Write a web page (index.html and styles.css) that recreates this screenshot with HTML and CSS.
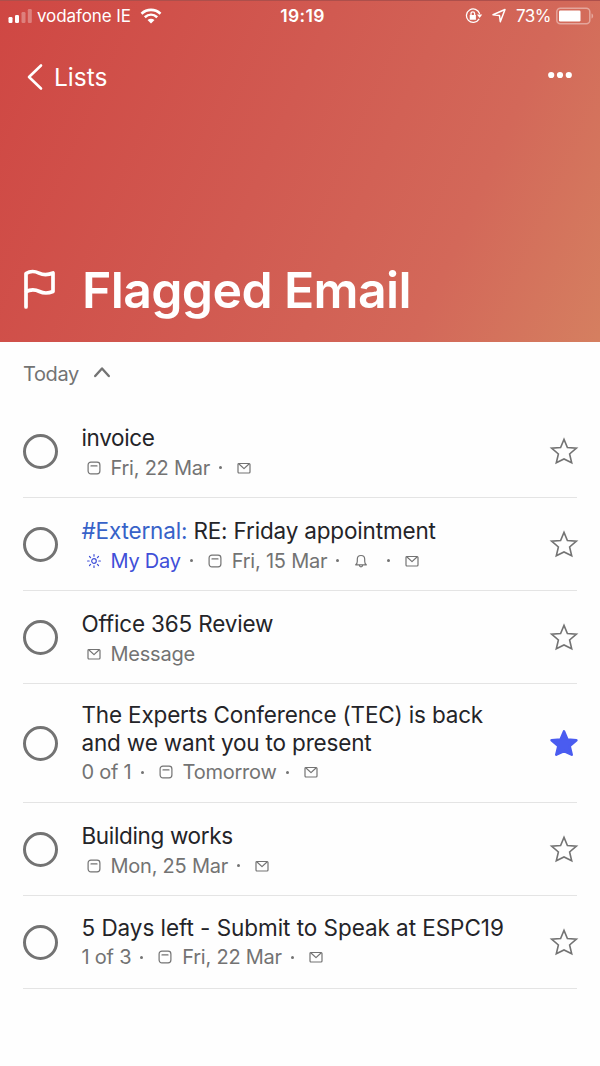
FILE: index.html
```html
<!DOCTYPE html>
<html lang="en">
<head>
    <meta charset="UTF-8">
    <meta name="viewport" content="width=device-width, initial-scale=1.0">
    <title>Flagged Email</title>
    <link rel="stylesheet" href="styles.css">
</head>
<body>
    <svg class="sprite" width="0" height="0">
        <symbol id="calendar" viewBox="0 0 14 14">
            <rect x="1.1" y="1.1" width="11.8" height="11.8" rx="2.8"/>
            <path d="M4 4.9h6"/>
        </symbol>
        <symbol id="mail" viewBox="0 0 14 14">
            <rect x="1" y="2.5" width="12" height="9.5" rx="1"/>
            <path d="M2 3l5 4.6L12 3"/>
        </symbol>
        <symbol id="bell" viewBox="0 0 14 14">
            <path d="M1.7 10.8c1.1-.8 1.6-1.9 1.6-3.5V5.2c0-2.3 1.5-3.7 3.7-3.7s3.7 1.4 3.7 3.7v2.1c0 1.6.5 2.7 1.6 3.5zM5.2 11c.2 1.3.8 1.8 1.8 1.8s1.6-.5 1.8-1.8"/>
        </symbol>
        <symbol id="sun" viewBox="0 0 14 14">
            <circle cx="7" cy="7" r="2.3"/>
            <path d="M7 .6v1.6M7 11.8v1.6M.6 7h1.6M11.8 7h1.6M2.5 2.5l1.1 1.1M10.4 10.4l1.1 1.1M2.5 11.5l1.1-1.1M10.4 3.6l1.1-1.1"/>
        </symbol>
        <symbol id="star" viewBox="0 0 30 30">
            <path d="M15 3.4l3.4 8.1 9 .7-6.8 5.8 2.1 8.7L15 23l-7.7 3.7L9.4 18l-6.8-5.8 9-.7z"/>
        </symbol>
    </svg>

    <header class="header">
        <div class="status-bar">
            <div class="status-left">
                <svg class="signal" width="24" height="16" viewBox="0 0 24 16">
                    <rect x="0.5" y="9" width="4" height="6" rx="1.2"/>
                    <rect x="7" y="7" width="4" height="8" rx="1.2"/>
                    <rect class="dim" x="13.5" y="4" width="4" height="11" rx="1.2"/>
                    <rect class="dim" x="19.8" y="1" width="4" height="14" rx="1.2"/>
                </svg>
                <span class="carrier">vodafone IE</span>
                <svg class="wifi" width="22" height="16" viewBox="0 0 22 16">
                    <path d="M1.5 5.7c5.500-5.100 13.500-5.100 19 0M4.800 9.200c3.700-3.300 8.700-3.300 12.400 0"/>
                    <path class="solid" d="M7.500 12.100c2.100-1.800 4.900-1.800 7 0L11 15.600z"/>
                </svg>
            </div>
            <span class="clock">19:19</span>
            <div class="status-right">
                <svg class="lock" width="18" height="16" viewBox="0 0 18 16">
                    <path d="M13.800 11.300a6.700 6.700 0 1 1 .7-5.800"/>
                    <path class="solid" d="M12 6.500h5.200l-2.600 3.500zM4.700 7h6.200v4.800H4.700z"/>
                    <path d="M6 7.300V5.600a1.800 1.800 0 0 1 3.600 0v1.700"/>
                </svg>
                <svg class="location" width="14" height="16" viewBox="0 0 14 16">
                    <path d="M13 1.500L8.300 13.700l-.8-6.200L1 6.800z"/>
                </svg>
                <span class="percent">73%</span>
                <svg class="battery" width="38" height="18" viewBox="0 0 38 18">
                    <rect class="shell" x=".8" y="1.2" width="33" height="15.5" rx="3.5"/>
                    <rect class="charge" x="3" y="3.5" width="21.5" height="11" rx="1.2"/>
                    <path class="tip" d="M35.500 6.500c2.200.6 2.200 4.400 0 5z"/>
                </svg>
            </div>
        </div>

        <nav class="nav">
            <a class="back" href="#">
                <svg width="16" height="28" viewBox="0 0 16 28">
                    <path d="M14 2.500L2 14l12 11.500"/>
                </svg>
                <span>Lists</span>
            </a>
            <svg class="more" width="24" height="8" viewBox="0 0 24 8">
                <circle cx="3.2" cy="4" r="3.1"/>
                <circle cx="12" cy="4" r="3.1"/>
                <circle cx="20.8" cy="4" r="3.1"/>
            </svg>
        </nav>

        <div class="title-row">
            <svg class="flag" width="34" height="42" viewBox="0 0 34 42">
                <path d="M4 38V4.500c4-2.500 8.500-2.600 13-.4s9 2 14-.1v18.500c-4.500 1.800-9 2.200-13.500 0s-9-2.300-13.500.2"/>
            </svg>
            <h1>Flagged Email</h1>
        </div>
    </header>

    <main class="content">
        <div class="section">
            <span>Today</span>
            <svg width="18" height="12" viewBox="0 0 18 12">
                <path d="M2.200 10L9 2.500l6.800 7.500"/>
            </svg>
        </div>

        <ul class="tasks">
            <li class="task">
                <span class="check"></span>
                <div class="info">
                    <p class="name tight">invoice</p>
                    <div class="meta">
                        <svg class="icon"><use href="#calendar"/></svg><span>Fri, 22 Mar</span><i class="dot"></i>
                        <svg class="icon"><use href="#mail"/></svg>
                    </div>
                </div>
                <svg class="star"><use href="#star"/></svg>
            </li>
            <li class="task">
                <span class="check"></span>
                <div class="info">
                    <p class="name"><span class="tag">#External:</span> RE: Friday appointment</p>
                    <div class="meta">
                        <svg class="icon blue"><use href="#sun"/></svg><span class="blue">My Day</span><i class="dot"></i>
                        <svg class="icon"><use href="#calendar"/></svg><span>Fri, 15 Mar</span><i class="dot"></i>
                        <svg class="icon"><use href="#bell"/></svg><i class="dot"></i>
                        <svg class="icon"><use href="#mail"/></svg>
                    </div>
                </div>
                <svg class="star"><use href="#star"/></svg>
            </li>
            <li class="task">
                <span class="check"></span>
                <div class="info">
                    <p class="name">Office 365 Review</p>
                    <div class="meta">
                        <svg class="icon"><use href="#mail"/></svg><span>Message</span>
                    </div>
                </div>
                <svg class="star"><use href="#star"/></svg>
            </li>
            <li class="task tall">
                <span class="check"></span>
                <div class="info">
                    <p class="name">The Experts Conference (TEC) is back<br>and we want you to present</p>
                    <div class="meta">
                        <span>0 of 1</span><i class="dot"></i>
                        <svg class="icon"><use href="#calendar"/></svg><span>Tomorrow</span><i class="dot"></i>
                        <svg class="icon"><use href="#mail"/></svg>
                    </div>
                </div>
                <svg class="star starred"><use href="#star"/></svg>
            </li>
            <li class="task">
                <span class="check"></span>
                <div class="info">
                    <p class="name tight">Building works</p>
                    <div class="meta">
                        <svg class="icon"><use href="#calendar"/></svg><span>Mon, 25 Mar</span><i class="dot"></i>
                        <svg class="icon"><use href="#mail"/></svg>
                    </div>
                </div>
                <svg class="star"><use href="#star"/></svg>
            </li>
            <li class="task steps">
                <span class="check"></span>
                <div class="info">
                    <p class="name loose">5 Days left - Submit to Speak at ESPC19</p>
                    <div class="meta">
                        <span>1 of 3</span><i class="dot"></i>
                        <svg class="icon"><use href="#calendar"/></svg><span>Fri, 22 Mar</span><i class="dot"></i>
                        <svg class="icon"><use href="#mail"/></svg>
                    </div>
                </div>
                <svg class="star"><use href="#star"/></svg>
            </li>
        </ul>
    </main>
</body>
</html>
```
FILE: styles.css
```css
:root {
    --text: #242428;
    --muted: #737373;
    --blue: #3f4fd8;
    --line: #e4e4e4;
}

* {
    margin: 0;
    padding: 0;
    box-sizing: border-box;
}

body {
    width: 600px;
    min-height: 1066px;
    background: #fefefe;
    color: var(--text);
    font-family: Inter, "Liberation Sans", sans-serif;
    overflow: hidden;
}

svg {
    display: block;
    flex-shrink: 0;
    fill: none;
    stroke: currentColor;
    stroke-linecap: round;
    stroke-linejoin: round;
}

.sprite {
    position: absolute;
}

.header {
    display: flex;
    flex-direction: column;
    height: 342px;
    border-top: 1px solid #ad4f4b;
    background: linear-gradient(114deg, #cf4743 0%, #d15a51 45%, #d36859 75%, #d57f60 100%);
    color: #fff;
}

.status-bar {
    display: grid;
    grid-template-columns: 1fr auto 1fr;
    align-items: center;
    height: 29px;
    padding: 0 6px 0 8px;
    font-size: 17px;
}

.status-left,
.status-right {
    display: flex;
    align-items: center;
}

.status-right {
    justify-content: flex-end;
}

.signal {
    fill: #fff;
    stroke: none;
}

.signal .dim {
    opacity: 0.3;
}

.carrier {
    margin: 0 9px 0 5px;
    letter-spacing: -0.1px;
}

.wifi {
    stroke-width: 2.6;
    stroke-linecap: butt;
}

.solid {
    fill: #fff;
    stroke: none;
}

.clock {
    padding-left: 3px;
    font-size: 17.5px;
    font-weight: 600;
    letter-spacing: 0.3px;
}

.lock {
    stroke-width: 1.3;
    margin-right: 9px;
}

.location {
    stroke-width: 1.5;
    margin-right: 10px;
}

.percent {
    margin-right: 5px;
    letter-spacing: -0.5px;
}

.battery .shell {
    stroke: rgba(255, 255, 255, 0.4);
    stroke-width: 1.5;
}

.battery .charge {
    fill: #fff;
    stroke: none;
}

.battery .tip {
    fill: rgba(255, 255, 255, 0.4);
    stroke: none;
}

.nav {
    display: flex;
    align-items: center;
    justify-content: space-between;
    height: 94px;
    padding: 0 28px 0 27px;
}

.back {
    display: flex;
    align-items: center;
    gap: 11px;
    color: #fff;
    font-size: 24.5px;
    text-decoration: none;
}

.back svg {
    stroke-width: 2.6;
}

.more {
    fill: #fff;
    stroke: none;
    margin-bottom: 4px;
}

.title-row {
    display: flex;
    align-items: center;
    gap: 26px;
    margin-top: auto;
    height: 104px;
    padding-left: 22px;
}

.flag {
    stroke-width: 3.7;
}

h1 {
    font-size: 50px;
    font-weight: 600;
    line-height: 60px;
    letter-spacing: -0.65px;
}

.content {
    padding: 0 23px;
}

.section {
    display: flex;
    align-items: center;
    gap: 14px;
    height: 63px;
    color: var(--muted);
    font-size: 20px;
    letter-spacing: -0.4px;
}

.section svg {
    stroke-width: 2.4;
    margin-bottom: 3px;
}

.tasks {
    list-style: none;
}

.task {
    display: flex;
    align-items: center;
    height: 93px;
    border-bottom: 1px solid var(--line);
}

.task.tall {
    height: 119px;
}

.check {
    width: 35px;
    height: 35px;
    border: 3px solid var(--muted);
    border-radius: 50%;
}

.info {
    flex: 1;
    padding: 5px 0 0 23.5px;
}

.tall .info,
.steps .info {
    padding-top: 2px;
}

.name {
    font-size: 22.5px;
    line-height: 28px;
    letter-spacing: -0.17px;
    white-space: nowrap;
}

.name.tight {
    letter-spacing: -0.35px;
}

.name.loose {
    letter-spacing: -0.05px;
}

.tag {
    color: #3762c8;
}

.meta {
    display: flex;
    align-items: center;
    height: 31px;
    color: var(--muted);
    font-size: 20px;
    letter-spacing: -0.23px;
    white-space: nowrap;
}

.icon {
    width: 14px;
    height: 14px;
    margin: 0 10px 0 5px;
    stroke-width: 1.2;
}

.blue {
    color: var(--blue);
}

.dot {
    width: 3px;
    height: 3px;
    margin: 0 10px 0 9px;
    border-radius: 50%;
    background: var(--muted);
}

.star {
    width: 30px;
    height: 30px;
    margin-right: -2px;
    color: var(--muted);
    stroke-width: 1.6;
    stroke-linejoin: miter;
}

.starred {
    color: #4a5cf0;
    fill: #4a5cf0;
    stroke-width: 2.6;
    stroke-linejoin: round;
}
```
